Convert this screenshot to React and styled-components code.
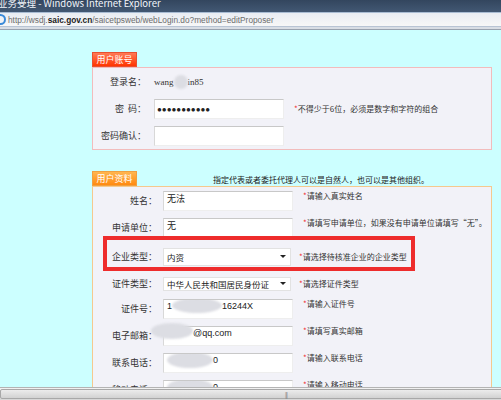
import React from 'react'
import styled, { createGlobalStyle } from 'styled-components'

const Global = createGlobalStyle`
  body {
    margin: 0;
    font-family: "Noto Sans CJK SC", "Liberation Sans", sans-serif;
    background: #ccffff;
  }
`

const Window = styled.div`
  width: 501px;
  height: 400px;
  overflow: hidden;
  display: flex;
  flex-direction: column;
  background: #ccffff;
`

const TitleBar = styled.div`
  height: 12px;
  flex: none;
  overflow: hidden;
  background: linear-gradient(#33465e, #425873);
  color: #f2f5fa;
  font-size: 9.5px;
  line-height: 12px;
  span {
    display: block;
    margin-top: -3px;
    margin-left: -2px;
  }
`

const AddressBar = styled.div`
  height: 13px;
  flex: none;
  display: flex;
  align-items: center;
  gap: 2px;
  background: linear-gradient(#e9edf3, #f7f7f7);
  border-top: 1px solid #a9bcd3;
  border-bottom: 1px solid #b8c4d4;
  font-family: "Liberation Sans", sans-serif;
  font-size: 8.3px;
  color: #6d6d6d;
  white-space: nowrap;
  b {
    color: #222;
  }
`

const Separator = styled.div`
  height: 2px;
  flex: none;
  background: #d8dde4;
  border-bottom: 1px solid #98a2ae;
`

const Content = styled.div`
  flex: 1;
  overflow: hidden;
  padding: 22px 0 0 92px;
  display: flex;
  flex-direction: column;
  gap: 21px;
`

const ScrollBar = styled.div`
  height: 12px;
  flex: none;
  background: linear-gradient(#f2f2f2, #d6d6d6);
  border-top: 1px solid #b4b4b4;
  position: relative;
  span {
    position: absolute;
    left: 0;
    width: 570px;
    top: 1px;
    bottom: 1px;
    background: linear-gradient(#ececec, #d2d2d2);
    border: 1px solid #a8a8a8;
    border-radius: 2px;
    font-size: 6px;
    line-height: 9px;
    color: #777;
    text-align: center;
    letter-spacing: -1px;
  }
`

const Panel = styled.section`
  width: 400px;
  position: relative;
`

const TabRow = styled.div`
  display: flex;
  align-items: center;
  height: 15px;
`

const Tab = styled.div`
  width: 45px;
  height: 15px;
  box-sizing: border-box;
  background: ${p => p.$orange
    ? 'linear-gradient(#ffb650, #ff8a10)'
    : 'linear-gradient(#ff7a55, #ff3500)'};
  border: 1px solid ${p => (p.$orange ? '#f0a040' : '#e85030')};
  color: #fff;
  font-size: 9px;
  line-height: 13px;
  text-align: center;
  white-space: nowrap;
`

const Note = styled.div`
  margin-left: 76px;
  font-size: 8px;
  color: #222;
  white-space: nowrap;
  margin-top: 2px;
`

const Box = styled.div`
  background: #f2f2f8;
  border: 1px solid ${p => p.$border};
  padding: ${p => p.$pad};
  display: flex;
  flex-direction: column;
`

const Row = styled.div`
  display: grid;
  grid-template-columns: ${p => p.$label}px 140px 1fr;
  align-items: center;
  height: ${p => p.$h || 27}px;
`

const Label = styled.div`
  text-align: right;
  font-size: 9px;
  color: #333;
  padding-right: ${p => p.$pr || 6}px;
  white-space: nowrap;
`

const Value = styled.div`
  font-family: "Liberation Serif", "Noto Sans CJK SC", serif;
  font-size: 9px;
  color: #333;
  display: flex;
  align-items: center;
`

const Input = styled.div`
  width: 130px;
  height: 20px;
  box-sizing: border-box;
  background: #fff;
  border-top: 1px solid #c8c8c8;
  border-left: 1px solid #d8d8d8;
  border-right: 1px solid #eee;
  border-bottom: 1px solid #eee;
  font-size: ${p => (p.$dots ? 8 : 9)}px;
  color: #222;
  padding: ${p => (p.$dots ? '3px 2px' : '0 3px')};
  line-height: 13px;
  white-space: nowrap;
  overflow: ${p => (p.$spill ? 'visible' : 'hidden')};
  font-family: ${p => (p.$latin ? '"Liberation Sans", sans-serif' : 'inherit')};
`

const Select = styled.div`
  width: 128px;
  height: ${p => p.$h || 18}px;
  box-sizing: border-box;
  background: #fff;
  border: 1px solid #e2e2e2;
  font-size: 8.5px;
  color: #222;
  padding: 0 4px 0 3px;
  display: flex;
  align-items: center;
  justify-content: space-between;
  white-space: nowrap;
  &::after {
    content: '';
    flex: none;
    border-left: 3px solid transparent;
    border-right: 3px solid transparent;
    border-top: 3px solid #222;
  }
`

const Hint = styled.div`
  font-size: 8px;
  color: #333;
  white-space: nowrap;
  align-self: ${p => (p.$top ? 'start' : 'center')};
  margin-top: ${p => (p.$top ? 3 : 0)}px;
  margin-left: ${p => p.$shift || 0}px;
  &::before {
    content: '*';
    color: #f03030;
  }
`

const Blur = styled.span`
  display: inline-block;
  width: ${p => p.$w}px;
  height: ${p => p.$h || 14}px;
  border-radius: 50%;
  background: #dcdde3;
  filter: blur(1px);
  vertical-align: middle;
  margin: ${p => p.$m || '0'};
`

const Highlight = styled.div`
  position: absolute;
  left: 11px;
  top: 65px;
  width: 312px;
  height: 35px;
  box-sizing: border-box;
  border: 4px solid #ee2c2c;
  pointer-events: none;
`

const IeIcon = () => (
  <svg width="6" height="11" viewBox="0 0 6 11">
    <circle cx="0.5" cy="5.5" r="4.5" fill="none" stroke="#3a8ad8" strokeWidth="2" />
  </svg>
)

const profile = [
  { label: '姓名：', kind: 'input', text: '无法', hint: '请输入真实姓名', top: true },
  { label: '申请单位：', kind: 'input', text: '无', hint: '请填写申请单位，如果没有申请单位请填写“无”。', top: true },
  { label: '企业类型：', kind: 'select', text: '内资', hint: '请选择待核准企业的企业类型', h: 31, shift: -4 },
  { label: '证件类型：', kind: 'select', text: '中华人民共和国居民身份证', hint: '请选择证件类型', h: 23, sh: 14, shift: -4 },
  { label: '证件号：', kind: 'id', hint: '请输入证件号', top: true },
  { label: '电子邮箱：', kind: 'mail', hint: '请填写真实邮箱', top: true },
  { label: '联系电话：', kind: 'phone', hint: '请输入联系电话', top: true },
  { label: '移动电话：', kind: 'phone', hint: '请输入移动电话', top: true }
]

const renderField = f => {
  if (f.kind === 'select') return <Select $h={f.sh}>{f.text}</Select>
  if (f.kind === 'id')
    return (
      <Input $latin>
        1<Blur $w={50} $h={15} $m="-2px 0 0 0" />16244X
      </Input>
    )
  if (f.kind === 'mail')
    return (
      <Input $latin $spill>
        <Blur $w={42} $h={16} $m="-4px 0 0 -16px" />@qq.com
      </Input>
    )
  if (f.kind === 'phone')
    return (
      <Input $latin>
        <Blur $w={46} $h={16} $m="-2px 0 0 0" />0
      </Input>
    )
  return <Input>{f.text}</Input>
}

const App = () => {
  return (
    <Window>
      <Global />
      <TitleBar>
        <span>业务受理 - Windows Internet Explorer</span>
      </TitleBar>
      <AddressBar>
        <IeIcon />
        <span>
          http://wsdj.<b>saic.gov.cn</b>/saicetpsweb/webLogin.do?method=editProposer
        </span>
      </AddressBar>
      <Separator />
      <Content>
        <Panel>
          <TabRow>
            <Tab>用户账号</Tab>
          </TabRow>
          <Box $border="#f2bcbc" $pad="0">
            <Row $label={61}>
              <Label $pr={8}>登录名：</Label>
              <Value>
                wang<Blur $w={14} $h={14} />in85
              </Value>
            </Row>
            <Row $label={61}>
              <Label $pr={8}>密&nbsp;&nbsp;码：</Label>
              <Input $latin $dots>●●●●●●●●●●●</Input>
              <Hint>不得少于6位，必须是数字和字符的组合</Hint>
            </Row>
            <Row $label={61}>
              <Label $pr={8}>密码确认：</Label>
              <Input />
            </Row>
          </Box>
        </Panel>
        <Panel>
          <TabRow>
            <Tab $orange>用户资料</Tab>
            <Note>指定代表或者委托代理人可以是自然人，也可以是其他组织。</Note>
          </TabRow>
          <Box $border="#f5c98e" $pad="0 0 20px">
            {profile.map(f => (
              <Row key={f.label} $label={70} $h={f.h}>
                <Label>{f.label}</Label>
                {renderField(f)}
                <Hint $shift={f.shift} $top={f.top}>{f.hint}</Hint>
              </Row>
            ))}
          </Box>
          <Highlight />
        </Panel>
      </Content>
      <ScrollBar>
        <span>|||</span>
      </ScrollBar>
    </Window>
  )
}

export default App
